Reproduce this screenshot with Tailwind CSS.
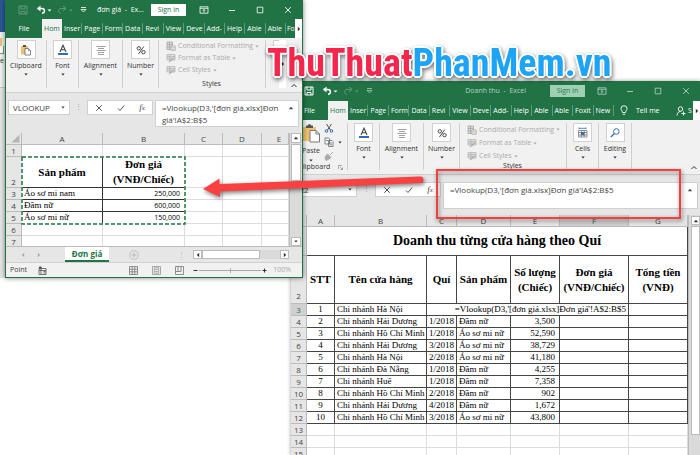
<!DOCTYPE html>
<html lang="vi">
<head>
<meta charset="utf-8">
<title>Excel - Vlookup</title>
<script src="https://cdn.jsdelivr.net/npm/@tailwindcss/browser@4"></script>
</head>
<body class="relative h-screen overflow-hidden bg-white font-['Open_Sans','Noto_Sans',sans-serif] text-[7px] leading-[10px] text-[#333]">

<svg class="hidden" aria-hidden="true">
  <symbol id="save" viewBox="0 0 10 10"><path d="M1 1h8v8H1zM3 1v3h4V1M3 9V6.5h4V9" fill="none" stroke="currentColor"/></symbol>
  <symbol id="undo" viewBox="0 0 16 10"><path d="M1.5 3.5H6c3 0 3.500 4.500 0 4.800" fill="none" stroke="currentColor" stroke-width="1.500"/><path d="M4.500.5L1 3.500l3.500 3z" fill="currentColor"/><path d="M11.500 4.500h4l-2 2z" fill="currentColor"/></symbol>
  <symbol id="redo" viewBox="0 0 16 10"><path d="M8.500 3.500H4c-3 0-3.500 4.500 0 4.800" fill="none" stroke="currentColor"/><path d="M6 1l3 2.500L6 6" fill="none" stroke="currentColor"/><path d="M12 4.500h3.500l-1.700 2z" fill="currentColor"/></symbol>
  <symbol id="more" viewBox="0 0 8 8"><path d="M2 1.500h5M2 3.500h5L4.500 6z" fill="none" stroke="currentColor" stroke-width=".8"/></symbol>
  <symbol id="disp" viewBox="0 0 10 8"><path d="M1 .8h8v6.400H1zM1 2.300h8M5 6.500V3.500M3.700 4.700L5 3.400l1.300 1.300" fill="none" stroke="currentColor" stroke-width=".8"/></symbol>
  <symbol id="min" viewBox="0 0 8 8"><path d="M1 4.500h6" stroke="currentColor" stroke-width=".9"/></symbol>
  <symbol id="max" viewBox="0 0 8 8"><path d="M1.200 1.200h5.600v5.600H1.200z" fill="none" stroke="currentColor" stroke-width=".8"/></symbol>
  <symbol id="close" viewBox="0 0 8 8"><path d="M1.200 1.200l5.600 5.600M6.800 1.200L1.200 6.800" stroke="currentColor" stroke-width=".9"/></symbol>
  <symbol id="caret" viewBox="0 0 4 3"><path d="M.3.5h3.400L2 2.500z" fill="currentColor"/></symbol>
  <symbol id="left" viewBox="0 0 4 6"><path d="M3.200.8v4.400L.8 3z" fill="currentColor"/></symbol>
  <symbol id="right" viewBox="0 0 4 6"><path d="M.8.8v4.400L3.200 3z" fill="currentColor"/></symbol>
  <symbol id="up" viewBox="0 0 6 4"><path d="M.8 3.200h4.400L3 .8z" fill="currentColor"/></symbol>
  <symbol id="chev" viewBox="0 0 8 5"><path d="M1.500 4L4 1.500 6.500 4" fill="none" stroke="currentColor"/></symbol>
  <symbol id="paste" viewBox="0 0 12 12"><path d="M1 2h7v8.500H1z" fill="#f0c070"/><path d="M3 1h3v2H3z" fill="#555"/><path d="M5 4.500h3.500l2 2V11H5z" fill="#fff" stroke="#666" stroke-width=".8"/><path d="M8.300 4.500v2.200h2.200" fill="none" stroke="#666" stroke-width=".6"/></symbol>
  <symbol id="font" viewBox="0 0 12 12"><path d="M3 8L6 1.200 9 8M4 5.800h4" fill="none" stroke="#444" stroke-width="1.100"/><path d="M1 9h10v2H1z" fill="#2f6cb5"/></symbol>
  <symbol id="align" viewBox="0 0 12 12"><path d="M1.500 2.500h9M3 4.500h6M1.500 6.500h9M3 8.500h6M3 10.500h6" stroke="#888" stroke-width=".8"/></symbol>
  <symbol id="pct" viewBox="0 0 12 12"><g fill="none" stroke="#333" stroke-width=".9"><circle cx="3.800" cy="4.300" r="1.700"/><circle cx="8.500" cy="8.200" r="1.700"/><path d="M8.800 2.500L3.500 10"/></g></symbol>
  <symbol id="cond" viewBox="0 0 10 10"><path d="M1 1h5.500v7.500H1zM1 3.500h5.500M1 6h5.500M3.500 1v7.500" fill="#ddd" stroke="#a5a5a5" stroke-width=".8"/><path d="M5 5h4.300v4.300H5z" fill="#f1f1f1" stroke="#aaa" stroke-width=".8"/><path d="M6 6.500h2.500M6 8h2.500" stroke="#aaa" stroke-width=".6"/></symbol>
  <symbol id="sty" viewBox="0 0 10 10"><path d="M1 1.500h8v5.500H1zM1 3.500h8M1 5.200h8M4 1.500V7" fill="#e2e2e2" stroke="#b0b0b0" stroke-width=".7"/><path d="M9.500 3.500L5.500 8l-3 1.500 1.200-2.300z" fill="#aaa"/></symbol>
  <symbol id="cells" viewBox="0 0 12 12"><path d="M1.500 3.500h8.500v6.500H1.500zM1.500 5.500H10M1.500 8H10M4.300 3.500V10M7.200 3.500V10" fill="#fff" stroke="#777" stroke-width=".8"/><path d="M4 5.200h3.400v3H4z" fill="#2f6cb5"/><path d="M2 1.300h7M2 .5v1.600M9 .5v1.600" stroke="#2f6cb5" stroke-width=".8"/></symbol>
  <symbol id="find" viewBox="0 0 12 12"><circle cx="7.300" cy="4.500" r="2.800" fill="none" stroke="#2f6cb5"/><path d="M5.200 6.700L1.800 10" stroke="#2f6cb5" stroke-width="1.300"/></symbol>
</svg>

<!-- Desktop remnants behind the windows -->
<div class="absolute left-0 top-0 flex h-[278px] w-[7px] flex-col overflow-hidden bg-white" aria-hidden="true">
  <div class="h-8 shrink-0 bg-[#2b579a]"></div>
  <div class="flex h-14 shrink-0 flex-col border-b border-[#c8c8c8] bg-[#f1f1f1] pt-[6px]">
    <div class="h-2 w-[2px] bg-[#f0c070]"></div><div class="h-2 w-1 border-r border-b border-[#888] bg-white"></div>
    <span class="pt-[2px]">e</span>
  </div>
  <div class="flex-1 bg-[#e6e6e6]"></div>
</div>

<!-- Revenue workbook -->
<main class="absolute top-[81px] right-0 bottom-0 left-[291px] flex flex-col overflow-hidden bg-[#e6e6e6] shadow-[0_0_4px_rgba(0,0,0,0.4)]">
  <header class="flex h-5 shrink-0 items-center bg-[#217346] pl-[13px] text-white">
    <button aria-label="Save"><svg class="h-[10px] w-[10px]"><use href="#save"/></svg></button>
    <button aria-label="Undo" class="ml-2"><svg class="h-[10px] w-4"><use href="#undo"/></svg></button>
    <button aria-label="Redo" class="ml-[5px] text-[#5f9b7b]"><svg class="h-[10px] w-4"><use href="#redo"/></svg></button>
    <button aria-label="Customize toolbar" class="ml-[6px] text-[#a5c8b4]"><svg class="h-2 w-2"><use href="#more"/></svg></button>
    <h1 class="mr-6 ml-auto text-[#b5d2c1]">Doanh thu&nbsp; -&nbsp; Excel</h1>
    <button class="mr-[3px] h-3 w-[35px] bg-[#9fd0b4] text-[#2f7d53]">Sign in</button>
    <div class="flex text-[#b5d2c1] [&>button]:flex [&>button]:w-7 [&>button]:justify-center">
      <button aria-label="Ribbon options"><svg class="h-2 w-[10px]"><use href="#disp"/></svg></button>
      <button aria-label="Minimize"><svg class="h-2 w-2"><use href="#min"/></svg></button>
      <button aria-label="Maximize"><svg class="h-2 w-2"><use href="#max"/></svg></button>
      <button aria-label="Close"><svg class="h-2 w-2"><use href="#close"/></svg></button>
    </div>
  </header>
  <nav class="flex h-[19px] shrink-0 items-stretch bg-[#217346] text-white">
    <button class="w-[37px]">File</button>
    <button class="w-5 overflow-hidden bg-[#f1f1f1] pl-[2px] text-left text-[#217346]">Hom</button>
    <div class="my-1 grid flex-1 grid-cols-13 [&>button]:overflow-hidden [&>button]:border-r [&>button]:border-[#5f9b7b] [&>button]:pl-[2px] [&>button]:text-left [&>button]:whitespace-nowrap">
      <button>Inser</button><button>Page</button><button>Form</button><button>Data</button><button>Revi</button><button>View</button><button>Deve</button><button>Add-</button><button>Help</button><button>Able</button><button>Able</button><button>Foxit</button><button>New</button>
    </div>
    <button class="flex w-[62px] items-center gap-2 pl-[6px]"><svg class="h-[11px] w-2" viewBox="0 0 8 11"><path d="M2.500 7.500C2.500 6 1 5.500 1 3.700a3 3 0 016 0C7 5.500 5.500 6 5.500 7.500zM2.800 9.300h2.400" fill="none" stroke="#fff" stroke-width=".9"/></svg>Tell me</button>
    <button class="flex w-[17px] items-center gap-[2px]"><svg class="h-[10px] w-[10px] shrink-0" viewBox="0 0 10 10"><circle cx="4.500" cy="3" r="2.200" fill="none" stroke="#fff" stroke-width=".9"/><path d="M1 9.500C1 7 2.500 5.500 4.500 5.500M5.500 7.500h4M7.500 5.500v4" fill="none" stroke="#fff" stroke-width=".9"/></svg>S</button>
    <button aria-label="Scroll tabs" class="flex w-[7px] items-center justify-center bg-white text-[#333]"><svg class="h-[6px] w-1"><use href="#right"/></svg></button>
  </nav>
  <section aria-label="Ribbon" class="relative flex h-[55px] shrink-0 border-b border-[#d0d0d0] bg-[#f1f1f1] pt-[3px] pb-1">
    <div class="relative flex w-[57px] flex-col border-r border-[#cfcfcf]">
      <div class="flex h-[39px] gap-[3px] pl-[10px]">
        <button class="flex w-5 flex-col items-center"><svg class="h-5 w-5" viewBox="0 0 20 20"><path d="M1 4h14v14H1z" fill="#f0c070"/><path d="M5 5V2.500h2a1.500 1.500 0 013 0h2V5z" fill="#555"/><path d="M9 7.500h6l3.500 3.500v8H9z" fill="#fff" stroke="#777"/><path d="M15 7.500V11h3.500" fill="none" stroke="#777"/></svg><span class="mt-1 leading-2">Paste</span><svg class="mt-1 h-[3px] w-1"><use href="#caret"/></svg></button>
        <div class="flex flex-col gap-1">
          <button aria-label="Cut"><svg class="block h-[10px] w-[10px]" viewBox="0 0 10 10"><path d="M2.500 1l4 6M7.500 1l-4 6" stroke="#555"/><circle cx="2.500" cy="8" r="1.300" fill="none" stroke="#2f6cb5"/><circle cx="7.500" cy="8" r="1.300" fill="none" stroke="#2f6cb5"/></svg></button>
          <button aria-label="Copy" class="flex items-center gap-1"><svg class="h-[10px] w-[10px]" viewBox="0 0 10 10"><path d="M1 1h3.500l1 1v5H1zM4.500 3.500h3.500l1 1v5H4.500z" fill="#fff" stroke="#666" stroke-width=".8"/><path d="M2 3.500h2M5.500 6h2.500M5.500 7.800h2.500" stroke="#2f6cb5" stroke-width=".8"/></svg><svg class="h-[3px] w-1"><use href="#caret"/></svg></button>
          <button aria-label="Format painter"><svg class="block h-[10px] w-[10px]" viewBox="0 0 10 10"><path d="M9 1L6 4M3.500 3l3.500 3.500-2 1.500L2 9.500 1 6z" fill="#aaa" stroke="#aaa"/></svg></button>
        </div>
      </div>
      <div class="flex items-center justify-between pt-[1px] pr-1 pl-3 leading-2"><span>lipboard</span><svg class="h-[5px] w-[5px]" viewBox="0 0 5 5"><path d="M.5 4V.5H4M2 2l2.500 2.500M4.500 2.500v2h-2" fill="none" stroke="#777" stroke-width=".6"/></svg></div>
    </div>
    <button class="flex w-8 flex-col items-center border-r border-[#cfcfcf]"><span class="flex size-[19px] items-center justify-center border border-[#d0d0d0] bg-white"><svg class="size-3"><use href="#font"/></svg></span><span class="mt-[2px]">Font</span><svg class="mt-[2px] h-[3px] w-1"><use href="#caret"/></svg></button>
    <button class="flex w-11 flex-col items-center border-r border-[#cfcfcf]"><span class="flex size-[19px] items-center justify-center border border-[#d0d0d0] bg-white"><svg class="size-3"><use href="#align"/></svg></span><span class="mt-[2px]">Alignment</span><svg class="mt-[2px] h-[3px] w-1"><use href="#caret"/></svg></button>
    <button class="flex w-9 flex-col items-center border-r border-[#cfcfcf]"><span class="flex size-[19px] items-center justify-center border border-[#d0d0d0] bg-white"><svg class="size-3"><use href="#pct"/></svg></span><span class="mt-[2px]">Number</span><svg class="mt-[2px] h-[3px] w-1"><use href="#caret"/></svg></button>
    <div class="flex w-[107px] flex-col border-r border-[#cfcfcf] pl-[7px] text-[#aaa]">
      <button disabled class="flex h-[14px] items-center gap-[2px] whitespace-nowrap"><svg class="size-[10px]"><use href="#cond"/></svg>Conditional Formatting<svg class="h-[3px] w-1"><use href="#caret"/></svg></button>
      <button disabled class="flex h-[14px] items-center gap-[2px]"><svg class="size-[10px]"><use href="#sty"/></svg>Format as Table<svg class="h-[3px] w-1"><use href="#caret"/></svg></button>
      <button disabled class="flex h-3 items-center gap-[2px]"><svg class="size-[10px]"><use href="#sty"/></svg>Cell Styles<svg class="h-[3px] w-1"><use href="#caret"/></svg></button>
      <span class="pr-2 text-center leading-2 text-[#333]">Styles</span>
    </div>
    <button class="flex w-8 flex-col items-center border-r border-[#cfcfcf]"><span class="flex size-[19px] items-center justify-center border border-[#d0d0d0] bg-white"><svg class="size-3"><use href="#cells"/></svg></span><span class="mt-[2px]">Cells</span><svg class="mt-[2px] h-[3px] w-1"><use href="#caret"/></svg></button>
    <button class="flex w-[33px] flex-col items-center border-r border-[#cfcfcf]"><span class="flex size-[19px] items-center justify-center border border-[#d0d0d0] bg-white"><svg class="size-3"><use href="#find"/></svg></span><span class="mt-[2px]">Editing</span><svg class="mt-[2px] h-[3px] w-1"><use href="#caret"/></svg></button>
    <button aria-label="Collapse ribbon" class="mr-[2px] ml-auto self-end"><svg class="h-[5px] w-2"><use href="#chev"/></svg></button>
  </section>
  <section aria-label="Formula bar" class="flex h-10 shrink-0 items-start pt-[7px] pr-[2px] text-[#444]">
    <div class="flex h-[15px] w-[66px] items-center border border-[#d0d0d0] bg-white pr-1"><input aria-label="Name box" value="R2" class="w-full min-w-0 pl-[7px] text-[8px] outline-none"><svg class="h-[3px] w-1 shrink-0"><use href="#caret"/></svg></div>
    <span class="w-[18px] pt-[2px] text-center text-[#999]">⋮</span>
    <div class="flex h-[15px] w-[66px] items-center justify-around border border-[#d0d0d0] bg-white">
      <button aria-label="Cancel"><svg class="block size-2"><use href="#close"/></svg></button>
      <button aria-label="Enter"><svg class="block size-2" viewBox="0 0 8 8"><path d="M1 4.500l2 2L7.200 1.500" fill="none" stroke="#555"/></svg></button>
      <button class="font-['Liberation_Serif',serif] text-[9px] italic">f<span class="text-[7px]">x</span></button>
    </div>
    <div class="ml-[2px] flex h-[27px] flex-1 items-start border border-[#d0d0d0] bg-white pr-1"><textarea aria-label="Formula" rows="1" class="h-[25px] flex-1 resize-none overflow-hidden pt-[1px] pl-[6px] text-[8px] leading-3 outline-none">=Vlookup(D3,'[đơn giá.xlsx]Đơn giá'!A$2:B$5</textarea><svg class="mt-[5px] h-1 w-[6px]"><use href="#up"/></svg></div>
  </section>
  <div class="flex min-h-0 flex-1">
    <div class="min-w-0 flex-1 overflow-hidden border-r border-[#bbb] bg-white">
      <table class="w-full table-fixed border-separate border-spacing-0 font-['Liberation_Serif',serif] text-[9px] leading-[11px] whitespace-nowrap text-black [&_td]:h-3 [&_td]:overflow-hidden [&_td]:border-r [&_td]:border-b [&_td]:border-[#444] [&_td]:px-[2px] [&_tbody_th]:border-r [&_tbody_th]:border-b [&_tbody_th]:border-[#bbb] [&_tbody_th]:bg-[#e6e6e6] [&_tbody_th]:align-bottom [&_tbody_th]:font-['Open_Sans',sans-serif] [&_tbody_th]:text-[8px] [&_tbody_th]:font-normal [&_tbody_th]:text-[#444]">
        <colgroup><col class="w-4"><col class="w-7"><col class="w-[92px]"><col class="w-[30px]"><col class="w-[54px]"><col class="w-[49px]"><col class="w-[69px]"><col></colgroup>
        <thead class="font-['Open_Sans',sans-serif] text-[8px] text-[#444] [&_th]:h-3 [&_th]:border-r [&_th]:border-b [&_th]:border-[#bbb] [&_th]:bg-[#e6e6e6] [&_th]:font-normal">
          <tr><th></th><th>A</th><th>B</th><th>C</th><th>D</th><th>E</th><th class="bg-[#d0d0d0]! text-[#217346]">F</th><th>G</th></tr>
        </thead>
        <tbody>
          <tr><th>1</th><td colspan="7" class="h-[29px]! text-center text-[14px] leading-4 font-bold">Doanh thu từng cửa hàng theo Quí</td></tr>
          <tr class="text-center text-[11px] leading-[15px] font-bold [&>td]:h-12! [&>td]:px-0!"><th>2</th><td>STT</td><td>Tên cửa hàng</td><td>Quí</td><td>Sản phẩm</td><td>Số lượng<br>(Chiếc)</td><td>Đơn giá<br>(VNĐ/Chiếc)</td><td>Tổng tiền<br>(VNĐ)</td></tr>
          <tr><th class="bg-[#d0d0d0]! text-[#217346]!">3</th><td class="text-center">1</td><td>Chi nhánh Hà Nội</td><td colspan="4" class="text-right">=Vlookup(D3,'[đơn giá.xlsx]Đơn giá'!A$2:B$5</td><td></td></tr>
          <tr><th>4</th><td class="text-center">2</td><td>Chi nhánh Hải Dương</td><td class="text-right">1/2018</td><td>Đầm nữ</td><td class="pr-1! text-right">3,500</td><td></td><td></td></tr>
          <tr><th>5</th><td class="text-center">3</td><td>Chi nhánh Hồ Chí Minh</td><td class="text-right">1/2018</td><td>Áo sơ mi nữ</td><td class="pr-1! text-right">52,590</td><td></td><td></td></tr>
          <tr><th>6</th><td class="text-center">4</td><td>Chi nhánh Hải Dương</td><td class="text-right">3/2018</td><td>Áo sơ mi nữ</td><td class="pr-1! text-right">38,729</td><td></td><td></td></tr>
          <tr><th>7</th><td class="text-center">5</td><td>Chi nhánh Hà Nội</td><td class="text-right">2/2018</td><td>Áo sơ mi nữ</td><td class="pr-1! text-right">41,180</td><td></td><td></td></tr>
          <tr><th>8</th><td class="text-center">6</td><td>Chi nhánh Đà Nẵng</td><td class="text-right">1/2018</td><td>Đầm nữ</td><td class="pr-1! text-right">4,255</td><td></td><td></td></tr>
          <tr><th>9</th><td class="text-center">7</td><td>Chi nhánh Huế</td><td class="text-right">1/2018</td><td>Đầm nữ</td><td class="pr-1! text-right">7,358</td><td></td><td></td></tr>
          <tr><th>10</th><td class="text-center">8</td><td>Chi nhánh Hồ Chí Minh</td><td class="text-right">2/2018</td><td>Đầm nữ</td><td class="pr-1! text-right">902</td><td></td><td></td></tr>
          <tr><th>11</th><td class="text-center">9</td><td>Chi nhánh Hải Dương</td><td class="text-right">4/2018</td><td>Đầm nữ</td><td class="pr-1! text-right">1,672</td><td></td><td></td></tr>
          <tr><th>12</th><td class="text-center">10</td><td>Chi nhánh Hồ Chí Minh</td><td class="text-right">3/2018</td><td>Áo sơ mi nữ</td><td class="pr-1! text-right">43,800</td><td></td><td></td></tr>
          <tr class="[&>td]:border-[#dcdcdc]!"><th>13</th><td></td><td></td><td></td><td></td><td></td><td></td><td></td></tr>
          <tr class="[&>td]:border-[#dcdcdc]!"><th>14</th><td></td><td></td><td></td><td></td><td></td><td></td><td></td></tr>
          <tr class="[&>td]:border-[#dcdcdc]!"><th>15</th><td></td><td></td><td></td><td></td><td></td><td></td><td></td></tr>
        </tbody>
      </table>
    </div>
    <div class="flex w-[11px] shrink-0 flex-col bg-[#dadada] pl-[2px]">
      <button aria-label="Scroll up" class="mt-[1px] flex h-[9px] items-center justify-center border border-[#bbb] bg-white"><svg class="h-1 w-[6px]"><use href="#up"/></svg></button>
      <div class="mt-[1px] mb-5 flex-1 border border-[#bbb] bg-white"></div>
    </div>
  </div>
</main>

<!-- Price workbook -->
<section aria-label="đơn giá" class="absolute top-0 left-[5px] flex w-[298px] flex-col border border-t-0 border-[#217346] bg-[#e6e6e6] shadow-[0_0_5px_rgba(0,0,0,0.5)]">
  <header class="flex h-[19px] shrink-0 items-center bg-[#217346] pl-3 text-white">
    <button aria-label="Save" class="text-[#5f9b7b]"><svg class="h-[10px] w-[10px]"><use href="#save"/></svg></button>
    <button aria-label="Undo" class="ml-2"><svg class="h-[10px] w-4"><use href="#undo"/></svg></button>
    <button aria-label="Redo" class="ml-[5px] text-[#5f9b7b]"><svg class="h-[10px] w-4"><use href="#redo"/></svg></button>
    <button aria-label="Customize toolbar" class="ml-[6px]"><svg class="h-2 w-2"><use href="#more"/></svg></button>
    <h2 class="ml-[10px]">đơn giá&nbsp; -&nbsp; Ex...</h2>
    <button class="mr-1 ml-auto h-3 w-[35px] bg-white text-[#217346]">Sign in</button>
    <div class="flex [&>button]:flex [&>button]:w-7 [&>button]:justify-center">
      <button aria-label="Ribbon options"><svg class="h-2 w-[10px]"><use href="#disp"/></svg></button>
      <button aria-label="Minimize"><svg class="h-2 w-2"><use href="#min"/></svg></button>
      <button aria-label="Maximize"><svg class="h-2 w-2"><use href="#max"/></svg></button>
      <button aria-label="Close"><svg class="h-2 w-2"><use href="#close"/></svg></button>
    </div>
  </header>
  <nav class="flex h-[19px] shrink-0 items-stretch bg-[#217346] text-white">
    <button class="w-9">File</button>
    <button class="w-5 overflow-hidden bg-[#f1f1f1] pl-[2px] text-left text-[#217346]">Hom</button>
    <div class="my-1 grid flex-1 grid-cols-11 [&>button]:overflow-hidden [&>button]:border-r [&>button]:border-[#5f9b7b] [&>button]:pl-[2px] [&>button]:text-left [&>button]:whitespace-nowrap">
      <button>Inser</button><button>Page</button><button>Form</button><button>Data</button><button>Revi</button><button>View</button><button>Deve</button><button>Add-</button><button>Help</button><button>Able</button><button>Able</button>
    </div>
    <button class="w-[9px] pl-[1px] text-left">Fo</button>
    <button aria-label="Scroll tabs" class="flex w-[7px] items-center justify-center bg-white text-[#333]"><svg class="h-[6px] w-1"><use href="#right"/></svg></button>
  </nav>
  <section aria-label="Ribbon" class="flex h-[55px] shrink-0 border-b border-[#d0d0d0] bg-[#f1f1f1] pt-[2px] pb-1">
    <button class="flex w-[41px] flex-col items-center border-r border-[#cfcfcf]"><span class="flex size-[19px] items-center justify-center border border-[#d0d0d0] bg-white"><svg class="size-3"><use href="#paste"/></svg></span><span class="mt-[2px]">Clipboard</span><svg class="mt-[2px] h-[3px] w-1"><use href="#caret"/></svg></button>
    <button class="flex w-8 flex-col items-center border-r border-[#cfcfcf]"><span class="flex size-[19px] items-center justify-center border border-[#d0d0d0] bg-white"><svg class="size-3"><use href="#font"/></svg></span><span class="mt-[2px]">Font</span><svg class="mt-[2px] h-[3px] w-1"><use href="#caret"/></svg></button>
    <button class="flex w-11 flex-col items-center border-r border-[#cfcfcf]"><span class="flex size-[19px] items-center justify-center border border-[#d0d0d0] bg-white"><svg class="size-3"><use href="#align"/></svg></span><span class="mt-[2px]">Alignment</span><svg class="mt-[2px] h-[3px] w-1"><use href="#caret"/></svg></button>
    <button class="flex w-9 flex-col items-center border-r border-[#cfcfcf]"><span class="flex size-[19px] items-center justify-center border border-[#d0d0d0] bg-white"><svg class="size-3"><use href="#pct"/></svg></span><span class="mt-[2px]">Number</span><svg class="mt-[2px] h-[3px] w-1"><use href="#caret"/></svg></button>
    <div class="flex w-[107px] flex-col border-r border-[#cfcfcf] pl-[7px] text-[#aaa]">
      <button disabled class="flex h-[14px] items-center gap-[2px] whitespace-nowrap"><svg class="size-[10px]"><use href="#cond"/></svg>Conditional Formatting<svg class="h-[3px] w-1"><use href="#caret"/></svg></button>
      <button disabled class="flex h-[14px] items-center gap-[2px]"><svg class="size-[10px]"><use href="#sty"/></svg>Format as Table<svg class="h-[3px] w-1"><use href="#caret"/></svg></button>
      <button disabled class="flex h-[14px] items-center gap-[2px]"><svg class="size-[10px]"><use href="#sty"/></svg>Cell Styles<svg class="h-[3px] w-1"><use href="#caret"/></svg></button>
      <span class="pt-1 pr-2 text-center leading-2 text-[#333]">Styles</span>
    </div>
    <div class="ml-[7px] h-[19px] w-[6px] border border-r-0 border-[#d0d0d0] bg-white"></div>
    <button aria-label="More groups" class="flex w-[7px] items-center justify-center bg-white"><svg class="h-[6px] w-1"><use href="#right"/></svg></button>
    <button aria-label="Collapse ribbon" class="mr-1 ml-auto self-end"><svg class="h-[5px] w-2"><use href="#chev"/></svg></button>
  </section>
  <section aria-label="Formula bar" class="flex h-10 shrink-0 items-start pt-[7px] pr-[3px] pl-[2px] text-[#444]">
    <div class="flex h-[15px] w-[62px] items-center border border-[#d0d0d0] bg-white pr-1"><input aria-label="Name box" value="VLOOKUP" class="w-full min-w-0 pl-1 text-[8px] outline-none"><svg class="h-[3px] w-1 shrink-0"><use href="#caret"/></svg></div>
    <span class="w-[17px] pt-[2px] text-center text-[#999]">⋮</span>
    <div class="flex h-[15px] w-[66px] items-center justify-around border border-[#d0d0d0] bg-white">
      <button aria-label="Cancel"><svg class="block size-2"><use href="#close"/></svg></button>
      <button aria-label="Enter"><svg class="block size-2" viewBox="0 0 8 8"><path d="M1 4.500l2 2L7.200 1.500" fill="none" stroke="#555"/></svg></button>
      <button class="font-['Liberation_Serif',serif] text-[9px] italic">f<span class="text-[7px]">x</span></button>
    </div>
    <div class="ml-[2px] flex h-[27px] flex-1 items-start border border-[#d0d0d0] bg-white pr-1"><textarea aria-label="Formula" rows="2" class="h-[25px] min-w-0 flex-1 resize-none overflow-hidden pt-[1px] pl-[6px] text-[8px] leading-3 outline-none">=Vlookup(D3,'[đơn giá.xlsx]Đơn giá'!A$2:B$5</textarea><svg class="mt-[5px] h-1 w-[6px]"><use href="#up"/></svg></div>
  </section>
  <div class="flex h-[113px] shrink-0">
    <div class="relative min-w-0 flex-1 overflow-hidden border-r border-[#bbb] bg-white">
      <table class="w-full table-fixed border-separate border-spacing-0 font-['Liberation_Serif',serif] text-[9px] leading-[11px] whitespace-nowrap text-black [&_td]:h-3 [&_td]:overflow-hidden [&_td]:border-r [&_td]:border-b [&_td]:border-[#dcdcdc] [&_td]:px-[2px] [&_tbody_th]:border-r [&_tbody_th]:border-b [&_tbody_th]:border-[#bbb] [&_tbody_th]:bg-[#e6e6e6] [&_tbody_th]:align-bottom [&_tbody_th]:font-['Open_Sans',sans-serif] [&_tbody_th]:text-[8px] [&_tbody_th]:font-normal [&_tbody_th]:text-[#444]">
        <colgroup><col class="w-4"><col class="w-[81px]"><col class="w-[82px]"><col class="w-[38px]"><col class="w-[39px]"><col></colgroup>
        <thead class="font-['Open_Sans',sans-serif] text-[8px] text-[#444] [&_th]:h-3 [&_th]:border-r [&_th]:border-b [&_th]:border-[#bbb] [&_th]:bg-[#e6e6e6] [&_th]:font-normal">
          <tr><th><svg class="ml-[5px] block size-[9px]" viewBox="0 0 9 9"><path d="M8.500.5v8h-8z" fill="#b5b5b5"/></svg></th><th>A</th><th>B</th><th>C</th><th>D</th><th class="pl-2">E</th></tr>
        </thead>
        <tbody>
          <tr><th>1</th><td></td><td></td><td></td><td></td><td></td></tr>
          <tr><th>2</th><td class="h-[31px]! border-[#333]! text-center text-[11px] leading-[15px] font-bold">Sản phẩm</td><td class="border-b-[#333]! text-center text-[11px] leading-[15px] font-bold">Đơn giá<br>(VNĐ/Chiếc)</td><td></td><td></td><td></td></tr>
          <tr><th>3</th><td class="border-[#333]!">Áo sơ mi nam</td><td class="border-b-[#333]! pr-1! text-right font-['Open_Sans',sans-serif] text-[7px]">250,000</td><td></td><td></td><td></td></tr>
          <tr><th>4</th><td class="border-[#333]!">Đầm nữ</td><td class="border-b-[#333]! pr-1! text-right font-['Open_Sans',sans-serif] text-[7px]">600,000</td><td></td><td></td><td></td></tr>
          <tr><th>5</th><td class="border-r-[#333]!">Áo sơ mi nữ</td><td class="pr-1! text-right font-['Open_Sans',sans-serif] text-[7px]">150,000</td><td></td><td></td><td></td></tr>
          <tr><th>6</th><td></td><td></td><td></td><td></td><td></td></tr>
          <tr><th>7</th><td></td><td></td><td></td><td></td><td></td></tr>
        </tbody>
      </table>
      <svg class="absolute top-[23px] left-[15px] h-[69px] w-[165px]" aria-hidden="true"><rect x="1" y="1" width="163" height="67" fill="none" stroke="#fff" stroke-width="1.500"/><rect x="1" y="1" width="163" height="67" fill="none" stroke="#217346" stroke-width="1.500" stroke-dasharray="4 2"/></svg>
    </div>
    <div class="flex w-3 shrink-0 flex-col bg-[#dadada] px-[1px]">
      <button aria-label="Scroll up" class="flex h-[10px] items-center justify-center border border-[#bbb] bg-white"><svg class="h-1 w-[6px]"><use href="#up"/></svg></button>
      <div class="mt-[1px] h-[37px] border border-[#bbb] bg-white"></div>
      <button aria-label="Scroll down" class="mt-auto flex h-[9px] items-center justify-center border border-[#bbb] bg-white"><svg class="h-[3px] w-1"><use href="#caret"/></svg></button>
    </div>
  </div>
  <div class="flex h-4 shrink-0 items-center border-t border-[#bbb] pr-[13px] pl-[15px] text-[#aaa]">
    <button aria-label="Previous sheet"><svg class="block h-[6px] w-1"><use href="#left"/></svg></button>
    <button aria-label="Next sheet" class="ml-3"><svg class="block h-[6px] w-1"><use href="#right"/></svg></button>
    <button class="ml-6 h-[15px] w-11 self-start border-b-2 border-[#217346] bg-white text-[8px] font-bold text-[#217346]">Đơn giá</button>
    <button aria-label="New sheet" class="ml-5"><svg class="block size-[10px]" viewBox="0 0 10 10"><circle cx="5" cy="5" r="4.400" fill="none" stroke="#bbb" stroke-width=".8"/><path d="M5 2.500v5M2.500 5h5" stroke="#bbb"/></svg></button>
    <span class="mr-2 ml-auto">⋮</span>
    <button aria-label="Scroll left" class="flex h-[9px] w-[9px] items-center justify-center border border-[#bbb] bg-white text-[#333]"><svg class="h-[6px] w-1"><use href="#left"/></svg></button>
    <div class="h-[9px] w-[58px] border border-[#bbb] bg-white"></div>
    <div class="h-[9px] w-5 bg-[#dadada]"></div>
    <button aria-label="Scroll right" class="flex h-[9px] w-[9px] items-center justify-center border border-[#bbb] bg-white text-[#333]"><svg class="h-[6px] w-1"><use href="#right"/></svg></button>
  </div>
  <footer class="flex h-[15px] shrink-0 items-center border-t border-[#d0d0d0] bg-[#f1f1f1] pr-[11px] pl-1 text-[#444]">
    <span class="w-7">Point</span>
    <button aria-label="Record macro"><svg class="block size-[9px]" viewBox="0 0 9 9"><path d="M1 2.500h7v6H1zM1 4.500h7M3 2.500v6M5.500 5.500h2M5.500 7h2" fill="none" stroke="#555" stroke-width=".8"/><circle cx="2.300" cy="1.800" r="1.500" fill="#555"/></svg></button>
    <button aria-label="Normal view" class="ml-auto"><svg class="block size-[9px]" viewBox="0 0 9 9"><path d="M.5.5h8v8h-8zM.5 3.200h8M.5 5.800h8M3.200.5v8M5.800.5v8" fill="none" stroke="#777" stroke-width=".8"/></svg></button>
    <button aria-label="Page layout" class="ml-[14px]"><svg class="block size-[9px]" viewBox="0 0 9 9"><path d="M.5.5h8v8h-8zM2.300 1.800h4.400v5.400H2.300zM3.200 3.500h2.600M3.200 5.500h2.600" fill="none" stroke="#888" stroke-width=".7"/></svg></button>
    <button aria-label="Page break" class="ml-[14px]"><svg class="block size-[9px]" viewBox="0 0 9 9"><path d="M.5.5h8v8h-8zM3 .5v5M.5 5.500h5.500v-5" fill="none" stroke="#777" stroke-width=".8"/></svg></button>
    <button class="ml-[9px]" aria-label="Zoom out"><svg class="block h-[5px] w-[5px]" viewBox="0 0 5 5"><path d="M.5 2.500h4" stroke="#333"/></svg></button>
    <div class="mx-[1px] flex h-[5px] w-[62px] items-center justify-center bg-[linear-gradient(#aaa,#aaa)] bg-[length:100%_1px] bg-center bg-no-repeat" role="slider" aria-label="Zoom" aria-valuenow="100"><span class="h-[5px] w-px bg-[#aaa]"></span></div>
    <button aria-label="Zoom in"><svg class="block h-[5px] w-[5px]" viewBox="0 0 5 5"><path d="M.5 2.500h4M2.500.5v4" stroke="#333"/></svg></button>
    <span class="ml-[6px] text-[#aaa]">100%</span>
  </footer>
</section>

<!-- Annotations -->
<svg class="pointer-events-none absolute top-[165px] left-[195px] h-[60px] w-[500px] drop-shadow-[1px_2px_2px_rgba(0,0,0,0.5)]" viewBox="0 0 500 60" aria-hidden="true">
  <path d="M8 24L24.500 13.500V19L225 11.500a3 3 0 01.5 6.500L25 26.500V32z" fill="#f94141"/>
  <rect x="242" y="5" width="243" height="48" fill="none" stroke="#f04040" stroke-width="2"/>
</svg>
<p class="absolute top-[41px] left-[267px] font-['Liberation_Sans_Narrow','Roboto_Condensed','Liberation_Sans',sans-serif] text-[38px] leading-[44px] font-bold whitespace-nowrap text-[#f5264c] drop-shadow-[1px_2px_2px_rgba(0,0,0,0.55)]"><span class="[text-shadow:-2px_0_#fff,2px_0_#fff,0_-2px_#fff,0_2px_#fff,1px_1px_#fff,-1px_-1px_#fff,1px_-1px_#fff,-1px_1px_#fff]">ThuThuat<span class="text-[#1ea4f5]">PhanMem.vn</span></span></p>
</body>
</html>
